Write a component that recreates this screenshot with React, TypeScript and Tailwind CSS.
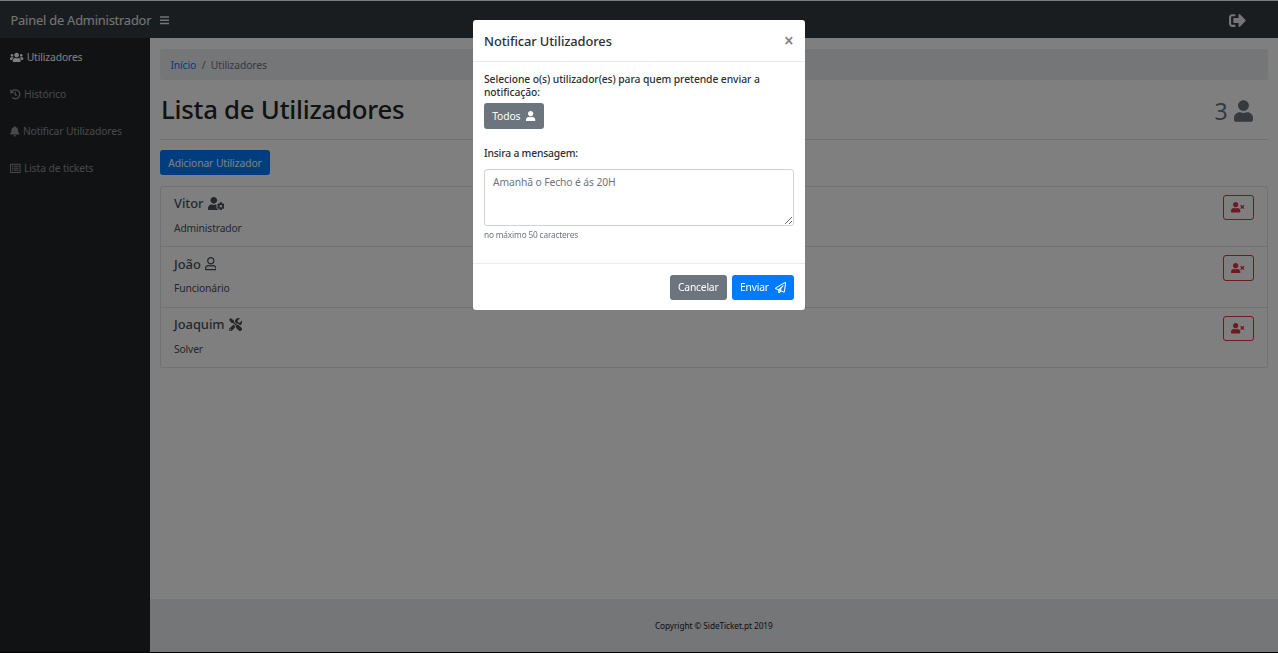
import type { ReactNode } from 'react';
import {
  FaBars,
  FaBell,
  FaHistory,
  FaRegListAlt,
  FaRegPaperPlane,
  FaRegUser,
  FaSignOutAlt,
  FaTools,
  FaUser,
  FaUserCog,
  FaUsers,
  FaUserTimes,
} from 'react-icons/fa';

const navItems: { label: string; icon: ReactNode; active?: boolean }[] = [
  { label: 'Utilizadores', icon: <FaUsers className="h-[10.6px] w-[13.3px]" />, active: true },
  { label: 'Histórico', icon: <FaHistory className="size-[10.6px]" /> },
  { label: 'Notificar Utilizadores', icon: <FaBell className="h-[10.6px] w-[9.5px]" /> },
  { label: 'Lista de tickets', icon: <FaRegListAlt className="size-[10.6px]" /> },
];

const users: { name: string; role: string; icon: ReactNode }[] = [
  { name: 'Vitor', role: 'Administrador', icon: <FaUserCog className="h-[13.3px] w-[16.6px]" /> },
  { name: 'João', role: 'Funcionário', icon: <FaRegUser className="h-[13.3px] w-[11.6px]" /> },
  { name: 'Joaquim', role: 'Solver', icon: <FaTools className="size-[13.3px]" /> },
];

function Header() {
  return (
    <header className="flex h-[38px] shrink-0 items-center border-t border-[#f8f9fa] bg-[#343a40] pr-[32.5px] pl-[10.5px] text-white/90">
      <span className="pt-[2px] text-[12.9px] tracking-[-0.22px] whitespace-nowrap">Painel de Administrador</span>
      <FaBars className="mt-px ml-[8.5px] h-[10.6px] w-[9.3px]" />
      <FaSignOutAlt className="mt-px ml-auto size-[17px]" />
    </header>
  );
}

function Sidebar() {
  return (
    <nav className="flex w-[149.6px] shrink-0 flex-col bg-[#212529]">
      {navItems.map((item) => (
        <a
          key={item.label}
          className={`flex h-[37.2px] items-center gap-[3px] pt-px pl-[10.4px] text-[10.3px] tracking-[-0.12px] whitespace-nowrap ${item.active ? 'text-white' : 'text-white/50'}`}
        >
          {item.icon}
          <span className="pt-px">{item.label}</span>
        </a>
      ))}
    </nav>
  );
}

function UserRow({ name, role, icon }: { name: string; role: string; icon: ReactNode }) {
  return (
    <li className="flex h-[60.5px] items-start justify-between border-b border-[#e4e4e4] pt-[8px] pr-[13px] pl-[13px]">
      <div className="text-[#495057]">
        <h5 className="flex h-[17px] items-center gap-[4px] text-[12.9px] font-medium tracking-[-0.03px]">
          <span className="pt-px">{name}</span>
          {icon}
        </h5>
        <p className="mt-[8px] text-[10.3px] leading-[16px] tracking-[-0.14px]">{role}</p>
      </div>
      <button className="flex h-[25.4px] w-[31px] items-center justify-center rounded-[3px] border border-[#dc3545] text-[#dc3545]">
        <FaUserTimes className="h-[10.6px] w-[13.3px]" />
      </button>
    </li>
  );
}

function Modal() {
  return (
    <div className="fixed inset-0 flex items-start justify-center bg-black/50 pt-[20px]">
      <div className="flex h-[290.4px] w-[331.4px] flex-col rounded-[3px] bg-white text-[#2b3035]">
        <div className="flex h-[42px] items-center justify-between border-b border-[#e9ecef] pr-[11px] pl-[10.7px]">
          <h5 className="pt-[2px] text-[12.9px] font-medium tracking-[-0.1px]">Notificar Utilizadores</h5>
          <span className="text-[17px] leading-none font-semibold text-[#7f7f7f]">×</span>
        </div>
        <div className="flex h-[202px] flex-col items-start border-b border-[#e9ecef] px-[10.7px] pt-[11px]">
          <p className="text-[10.3px] leading-[12.7px] font-medium tracking-[-0.07px] whitespace-nowrap">
            Selecione o(s) utilizador(es) para quem pretende enviar a<br />
            notificação:
          </p>
          <button className="mt-[5px] flex h-[25.4px] w-[60px] items-center justify-center gap-[6px] rounded-[3px] bg-[#6c757d] text-[10.3px] tracking-[-0.1px] text-white">
            <span className="pt-px">Todos</span>
            <FaUser className="h-[10.6px] w-[9.3px]" />
          </button>
          <p className="mt-[18.4px] text-[10.3px] leading-[12.7px] font-medium tracking-[-0.17px]">Insira a mensagem:</p>
          <textarea
            className="mt-[9px] block h-[57px] w-[310px] resize rounded-[3px] border border-[#ced4da] px-[8px] py-[4px] text-[10.3px] leading-[16px] tracking-[-0.09px] placeholder:text-[#6c757d]"
            placeholder="Amanhã o Fecho é ás 20H"
          />
          <small className="mt-[2px] text-[8.3px] leading-[13px] tracking-[-0.17px] text-[#6c757d]">
            no máximo 50 caracteres
          </small>
        </div>
        <div className="flex flex-1 items-center justify-end gap-[5px] pr-[10.7px] text-[10.3px] tracking-[-0.2px] text-white">
          <button className="h-[25.4px] w-[57.5px] rounded-[3px] bg-[#6c757d] pt-px">Cancelar</button>
          <button className="flex h-[25.4px] w-[62px] items-center justify-center gap-[6px] rounded-[3px] bg-[#007bff]">
            <span className="pt-px">Enviar</span>
            <FaRegPaperPlane className="size-[11.2px]" />
          </button>
        </div>
      </div>
    </div>
  );
}

export default function App() {
  return (
    <div className="flex h-[653px] w-[1278px] flex-col overflow-hidden bg-white font-['Noto_Sans',sans-serif] text-[#212529]">
      <Header />
      <div className="flex min-h-0 flex-1">
        <Sidebar />
        <div className="flex flex-1 flex-col">
          <main className="flex-1 px-[10.4px] pt-[10.6px]">
            <div className="flex h-[31.5px] items-center gap-[5.5px] rounded-[3px] bg-[#e9ecef] pt-[2.5px] pl-[10.4px] text-[10.3px] tracking-[-0.1px] text-[#6c757d]">
              <a className="text-[#007bff]">Início</a>
              <span>/</span>
              <span>Utilizadores</span>
            </div>
            <div className="flex h-[59.5px] items-center justify-between border-b border-[#e0e0e0] pr-[15px] pl-px">
              <h1 className="text-[25.8px] font-medium tracking-[-0.25px]">Lista de Utilizadores</h1>
              <div className="flex items-center gap-[6px] pt-[3px] text-[23px] text-[#6c757d]">
                3<FaUser className="h-[22px] w-[19px]" />
              </div>
            </div>
            <button className="mt-[10.2px] h-[25.4px] w-[110px] rounded-[3px] bg-[#007bff] pt-[2px] text-[10.3px] tracking-[-0.08px] text-white">
              Adicionar Utilizador
            </button>
            <ul className="mt-[10.8px] rounded-[3px] border border-b-0 border-[#e4e4e4]">
              {users.map((user) => (
                <UserRow key={user.name} {...user} />
              ))}
            </ul>
          </main>
          <footer className="flex h-[53px] items-center justify-center bg-[#e9ecef] pt-px text-[8.3px] tracking-[-0.08px]">
            Copyright © SideTicket.pt 2019
          </footer>
        </div>
      </div>
      <div className="h-px shrink-0 bg-black" />
      <Modal />
    </div>
  );
}
